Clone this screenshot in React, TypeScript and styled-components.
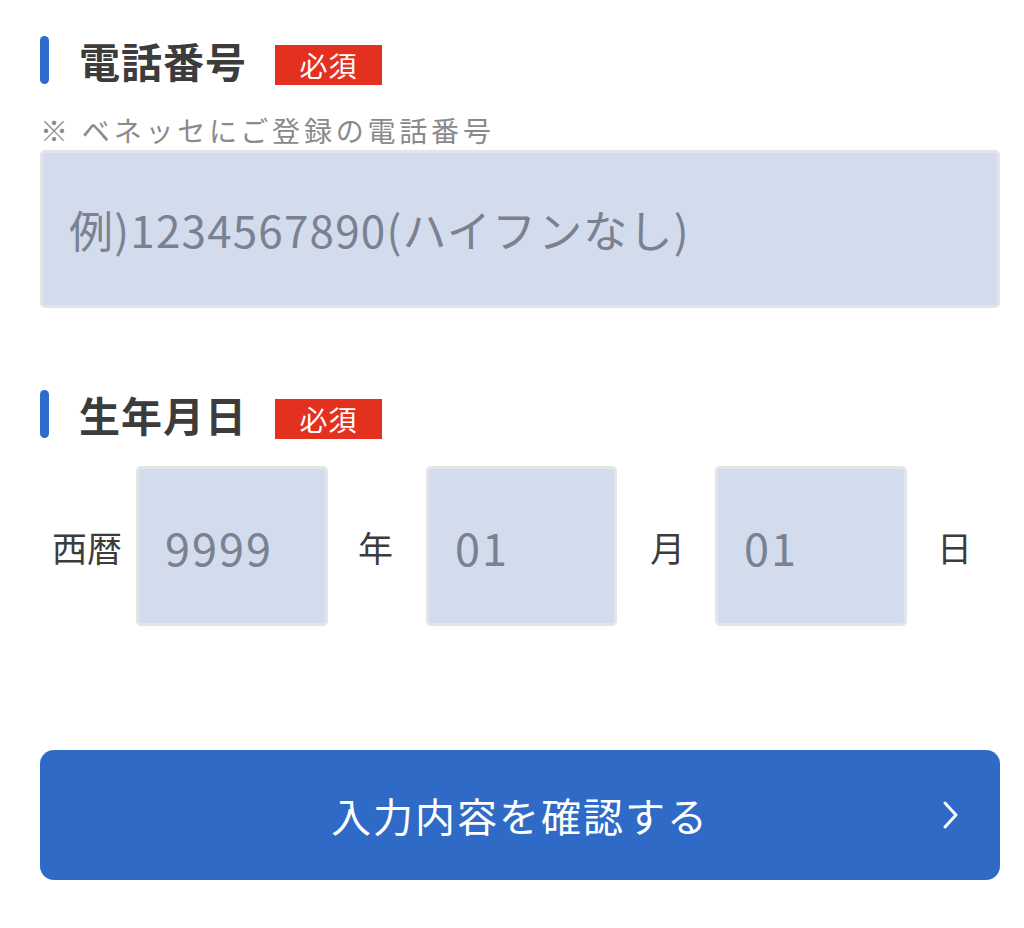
import styled, { createGlobalStyle } from "styled-components"

const GlobalStyle = createGlobalStyle`
  body {
    margin: 0;
    background: #ffffff;
    font-family: "Noto Sans CJK JP", "Noto Sans", sans-serif;
  }
`

const Styled = {
  Page: styled.div`
    width: 1024px;
    box-sizing: border-box;
    padding: 36px 24px 40px 40px;
  `,
  Section: styled.section<{ mt?: number }>`
    margin-top: ${({ mt = 0 }) => mt}px;
  `,
  Heading: styled.div`
    display: flex;
    align-items: center;
    height: 48px;
  `,
  Bar: styled.span`
    width: 9px;
    height: 48px;
    border-radius: 5px;
    background: #2d6bcc;
  `,
  Title: styled.h2`
    margin: 0 0 0 30px;
    font-size: 41px;
    font-weight: 700;
    line-height: 48px;
    color: #3c3c3c;
    letter-spacing: 1px;
  `,
  Badge: styled.span`
    display: flex;
    align-items: center;
    justify-content: center;
    margin: 9px 0 0 28px;
    width: 107px;
    height: 40px;
    background: #e3301f;
    color: #ffffff;
    font-size: 28px;
    line-height: 1;
    letter-spacing: 1px;
  `,
  Note: styled.p`
    margin: 29px 0 0 0;
    font-size: 28px;
    line-height: 34px;
    color: #8a8a8a;
    letter-spacing: 3.8px;
  `,
  Input: styled.input<{ w?: number }>`
    display: block;
    box-sizing: border-box;
    width: ${({ w }) => (w ? `${w}px` : "100%")};
    height: ${({ w }) => (w ? 160 : 158)}px;
    margin: 0;
    padding: 0 0 0 26px;
    border: 3px solid #e3e5e9;
    border-radius: 5px;
    background: #d3dcec;
    font-family: "Noto Sans CJK JP", "Noto Sans", sans-serif;
    font-size: ${({ w }) => (w ? 45 : 44)}px;
    letter-spacing: ${({ w }) => (w ? 2 : 1.2)}px;
    color: #333;
    outline: none;

    &::placeholder {
      color: #7b8190;
    }
  `,
  PhoneInput: styled.div`
    margin-top: 3px;
  `,
  DateRow: styled.div`
    display: flex;
    align-items: center;
    margin-top: 28px;
    padding-left: 12px;
  `,
  DateLabel: styled.span<{ ml: number }>`
    margin-left: ${({ ml }) => ml}px;
    font-size: 35px;
    line-height: 1;
    color: #3c3c3c;
  `,
  DateBox: styled.div<{ ml: number }>`
    margin-left: ${({ ml }) => ml}px;
  `,
  Submit: styled.button`
    position: relative;
    display: flex;
    align-items: center;
    justify-content: center;
    width: 100%;
    height: 130px;
    margin-top: 124px;
    border: none;
    border-radius: 14px;
    background: #2f6bc6;
    color: #ffffff;
    font-family: "Noto Sans CJK JP", "Noto Sans", sans-serif;
    font-size: 40px;
    letter-spacing: 2px;
    cursor: pointer;
  `,
  Chevron: styled.svg`
    position: absolute;
    right: 40px;
    top: 50%;
    transform: translateY(-50%);
  `,
}

const Heading = ({ title }: { title: string }) => (
  <Styled.Heading>
    <Styled.Bar />
    <Styled.Title>{title}</Styled.Title>
    <Styled.Badge>必須</Styled.Badge>
  </Styled.Heading>
)

export default function App() {
  return (
    <>
      <GlobalStyle />
      <Styled.Page>
        <Styled.Section>
          <Heading title="電話番号" />
          <Styled.Note>※ ベネッセにご登録の電話番号</Styled.Note>
          <Styled.PhoneInput>
            <Styled.Input placeholder="例)1234567890(ハイフンなし)" />
          </Styled.PhoneInput>
        </Styled.Section>

        <Styled.Section mt={82}>
          <Heading title="生年月日" />
          <Styled.DateRow>
            <Styled.DateLabel ml={0}>西暦</Styled.DateLabel>
            <Styled.DateBox ml={14}>
              <Styled.Input w={192} placeholder="9999" />
            </Styled.DateBox>
            <Styled.DateLabel ml={30}>年</Styled.DateLabel>
            <Styled.DateBox ml={33}>
              <Styled.Input w={191} placeholder="01" />
            </Styled.DateBox>
            <Styled.DateLabel ml={33}>月</Styled.DateLabel>
            <Styled.DateBox ml={30}>
              <Styled.Input w={192} placeholder="01" />
            </Styled.DateBox>
            <Styled.DateLabel ml={30}>日</Styled.DateLabel>
          </Styled.DateRow>
        </Styled.Section>

        <Styled.Submit>
          入力内容を確認する
          <Styled.Chevron width="18" height="30" viewBox="0 0 18 30">
            <path
              d="M3 3 L14 15 L3 27"
              fill="none"
              stroke="#ffffff"
              strokeWidth="3"
              strokeLinecap="round"
              strokeLinejoin="round"
            />
          </Styled.Chevron>
        </Styled.Submit>
      </Styled.Page>
    </>
  )
}
